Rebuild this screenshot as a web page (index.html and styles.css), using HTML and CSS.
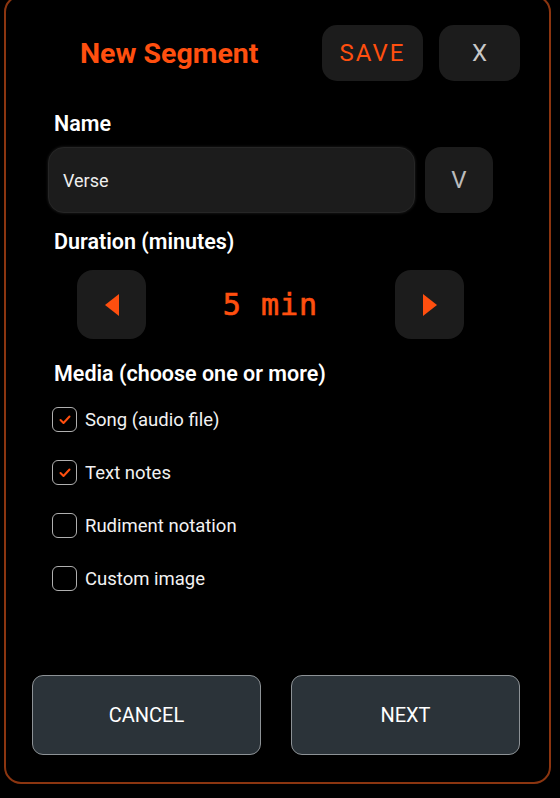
FILE: index.html
```html
<!DOCTYPE html>
<html lang="en">
<head>
  <meta charset="UTF-8">
  <meta name="viewport" content="width=device-width, initial-scale=1.0">
  <title>New Segment</title>
  <link rel="stylesheet" href="styles.css">
</head>
<body>

  <div class="dialog">
    <!-- Header -->
    <div class="header">
      <h1 class="title">New Segment</h1>
      <button class="btn-dark btn-save">SAVE</button>
      <button class="btn-dark btn-close">X</button>
    </div>

    <!-- Name -->
    <label class="field-label">Name</label>
    <div class="name-row">
      <div class="name-input">Verse</div>
      <button class="btn-dark btn-pick">V</button>
    </div>

    <!-- Duration -->
    <label class="field-label label-duration">Duration (minutes)</label>
    <div class="stepper">
      <button class="btn-dark btn-step">
        <svg width="14" height="22" viewBox="0 0 14 22"><polygon points="14,0 14,22 0,11" fill="#ff4f0f"/></svg>
      </button>
      <span class="step-value">5 min</span>
      <button class="btn-dark btn-step">
        <svg width="14" height="22" viewBox="0 0 14 22"><polygon points="0,0 0,22 14,11" fill="#ff4f0f"/></svg>
      </button>
    </div>

    <!-- Media -->
    <label class="field-label label-media">Media (choose one or more)</label>
    <div class="media-list">
      <div class="media-item">
        <span class="check checked">
          <svg width="12" height="10" viewBox="0 0 12 10"><polyline points="1.5,5 4.5,8 10.5,1.5" fill="none" stroke="#ff4f0f" stroke-width="2" stroke-linecap="round" stroke-linejoin="round"/></svg>
        </span>
        <span>Song (audio file)</span>
      </div>
      <div class="media-item">
        <span class="check checked">
          <svg width="12" height="10" viewBox="0 0 12 10"><polyline points="1.5,5 4.5,8 10.5,1.5" fill="none" stroke="#ff4f0f" stroke-width="2" stroke-linecap="round" stroke-linejoin="round"/></svg>
        </span>
        <span>Text notes</span>
      </div>
      <div class="media-item">
        <span class="check"></span>
        <span>Rudiment notation</span>
      </div>
      <div class="media-item">
        <span class="check"></span>
        <span>Custom image</span>
      </div>
    </div>

    <!-- Footer -->
    <div class="footer">
      <button class="btn-footer">CANCEL</button>
      <button class="btn-footer">NEXT</button>
    </div>
  </div>

</body>
</html>
```

FILE: styles.css
```css
body {
  font-family: Roboto, "Liberation Sans", sans-serif;
  background-color: #000;
  color: #fff;
  margin: 0;
  padding: 0;
  height: 798px;
  overflow: hidden;
}

.dialog {
  margin: -5px 0 0 4px;
  width: 547px;
  height: 789px;
  box-sizing: border-box;
  border: 2px solid #8b3510;
  border-radius: 17px;
  padding: 28px 0 27px 0;
  display: flex;
  flex-direction: column;
}

button {
  font-family: inherit;
  border: none;
  cursor: pointer;
  padding: 0;
}

.btn-dark {
  background-color: #1c1c1c;
  border-radius: 15px;
  display: flex;
  align-items: center;
  justify-content: center;
}

/* Header */
.header {
  display: flex;
  align-items: center;
  gap: 16px;
  height: 56px;
  padding: 0 29px 0 74px;
}

.title {
  flex: 1;
  margin: 0;
  font-size: 28.5px;
  font-weight: 700;
  color: #ff4f0f;
}

.btn-save {
  width: 101px;
  height: 56px;
  font-size: 24px;
  letter-spacing: 2px;
  color: #ff4f0f;
}

.btn-close {
  width: 81px;
  height: 56px;
  font-size: 24px;
  color: #c8c8c8;
}

/* Labels */
.field-label {
  display: block;
  margin: 31px 0 0 48px;
  font-size: 21.5px;
  line-height: 24px;
  font-weight: 600;
}

.label-duration {
  margin-top: 17px;
}

.label-media {
  margin-top: 23px;
}

/* Name */
.name-row {
  display: flex;
  gap: 10px;
  margin: 11px 0 0 42px;
}

.name-input {
  width: 367px;
  height: 66px;
  box-sizing: border-box;
  background-color: #1c1c1c;
  border: 1px solid #262626;
  border-radius: 16px;
  box-shadow: 0 0 3px rgba(60, 60, 60, 0.6);
  padding: 0 14px;
  display: flex;
  align-items: center;
  font-size: 18px;
  color: #eee;
}

.btn-pick {
  width: 68px;
  height: 66px;
  border-radius: 16px;
  font-size: 24px;
  color: #bbb;
}

/* Duration stepper */
.stepper {
  display: flex;
  align-items: center;
  justify-content: space-between;
  width: 387px;
  margin: 16px 0 0 71px;
}

.btn-step {
  width: 69px;
  height: 69px;
  border-radius: 16px;
}

.step-value {
  font-family: "DejaVu Sans Mono", monospace;
  font-size: 30px;
  letter-spacing: 1px;
  -webkit-text-stroke: 0.7px #ff4f0f;
  color: #ff4f0f;
}

/* Media checkboxes */
.media-list {
  display: flex;
  flex-direction: column;
  gap: 28px;
  margin: 21px 0 0 46px;
}

.media-item {
  display: flex;
  align-items: center;
  gap: 8px;
  height: 25px;
  font-size: 18.5px;
  color: #f2f2f2;
}

.check {
  width: 25px;
  height: 25px;
  box-sizing: border-box;
  border: 1.5px solid #b0b0b0;
  border-radius: 6px;
  display: flex;
  align-items: center;
  justify-content: center;
}

/* Footer */
.footer {
  margin-top: auto;
  display: flex;
  gap: 30px;
  padding-left: 26px;
}

.btn-footer {
  width: 229px;
  height: 80px;
  box-sizing: border-box;
  background-color: #2b3339;
  border: 1.5px solid #8d9296;
  border-radius: 11px;
  font-size: 20px;
  color: #fff;
}
```
